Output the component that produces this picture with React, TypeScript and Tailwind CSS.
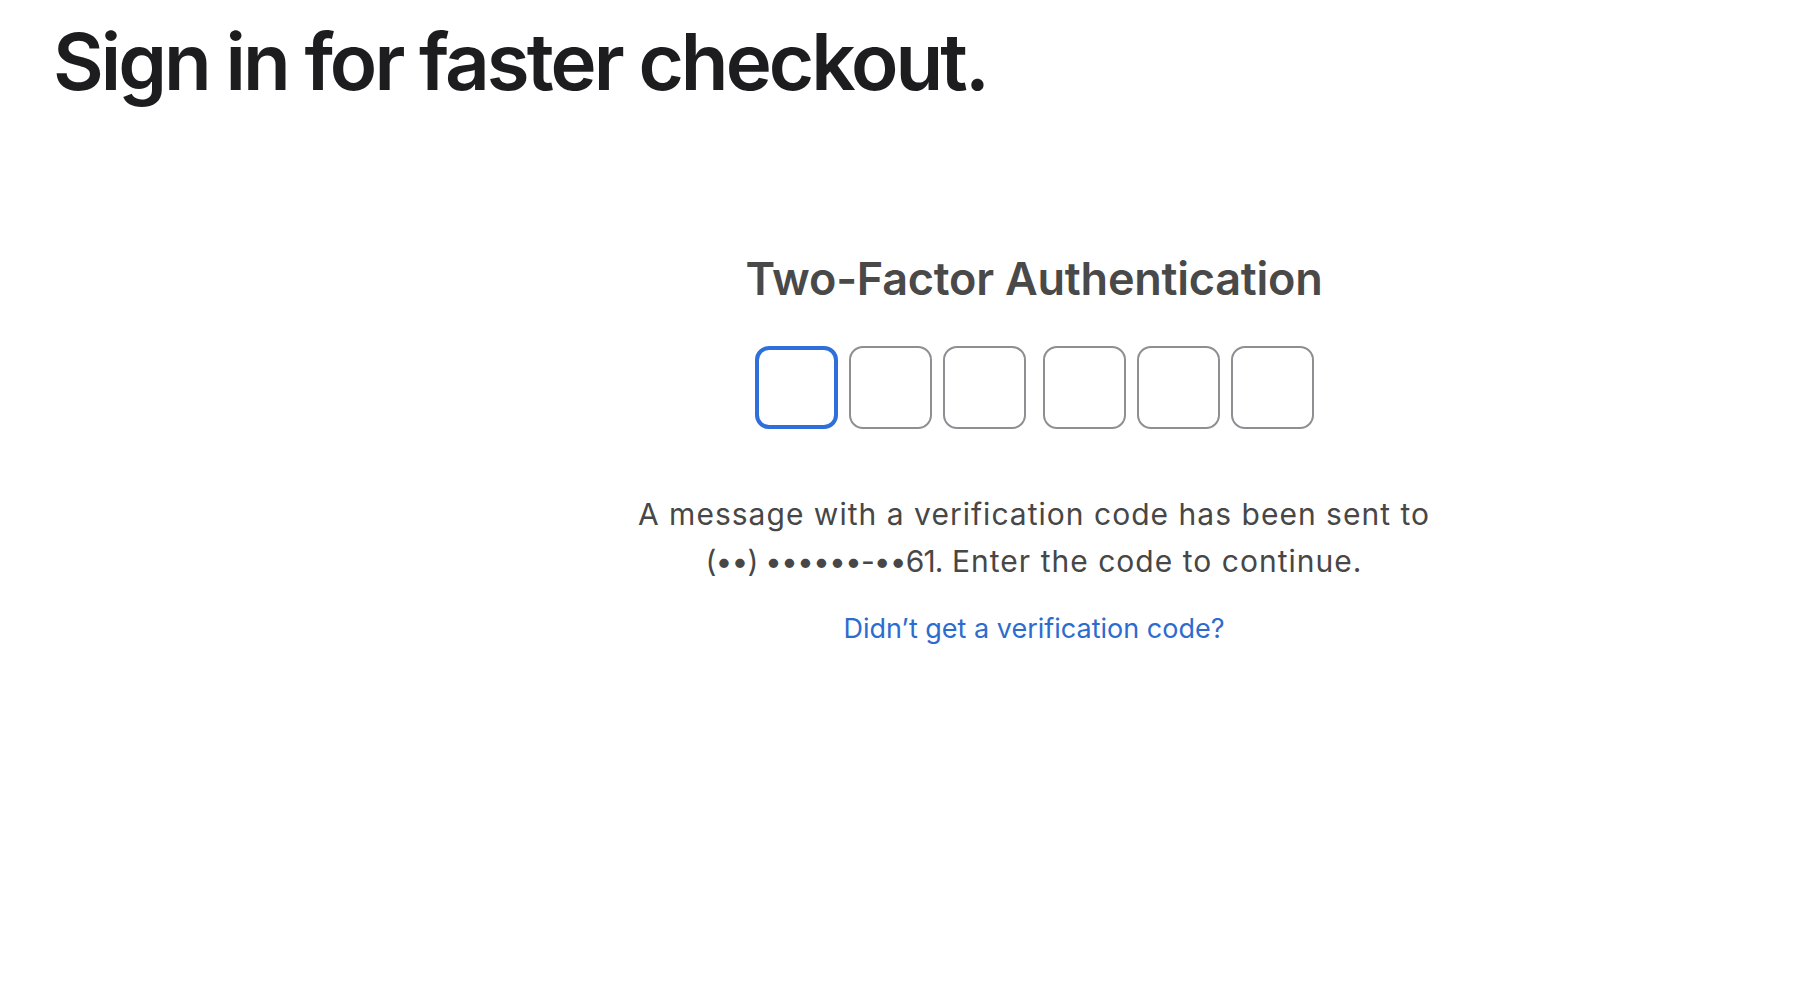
import { useState } from "react";

export default function App() {
  const [code, setCode] = useState<string[]>(["", "", "", "", "", ""]);

  function update(i: number, v: string) {
    const next = [...code];
    next[i] = v.slice(-1);
    setCode(next);
  }

  return (
    <div className="min-h-screen bg-white font-['Inter',sans-serif]">
      <h1 className="pl-[53px] pt-[22px] text-[78px] leading-[80px] font-semibold tracking-[-0.038em] text-[#1d1d1f]">
        Sign in for faster checkout.
      </h1>
      <div className="flex flex-col items-center pl-[252px]">
        <h2 className="mt-[150px] text-[45px] leading-[54px] font-semibold tracking-[-0.005em] text-[#494949]">
          Two-Factor Authentication
        </h2>
        <div className="mt-[40px] flex gap-[11px]">
          {code.map((c, i) => (
            <input
              key={i}
              value={c}
              onChange={(e) => update(i, e.target.value)}
              maxLength={1}
              inputMode="numeric"
              autoFocus={i === 0}
              className={
                i === 0
                  ? "w-[83px] h-[83px] rounded-[14px] border-4 border-[#2f6fd9] text-center text-[40px] outline-none"
                  : i === 3
                    ? "ml-[6px] w-[83px] h-[83px] rounded-[14px] border-2 border-[#8e8e93] text-center text-[40px] outline-none"
                    : "w-[83px] h-[83px] rounded-[14px] border-2 border-[#8e8e93] text-center text-[40px] outline-none"
              }
            />
          ))}
        </div>
        <p className="mt-[62px] max-w-[820px] text-center text-[30px] leading-[47px] tracking-[0.034em] text-[#474747]">
          A message with a verification code has been sent to{" "}
          <span className="tracking-[-0.03em]">(••) ••••••-••61.</span> Enter the code to continue.
        </p>
        <a href="#" className="mt-[26px] text-[27px] leading-[36px] text-[#2d6ccf]">
          Didn’t get a verification code?
        </a>
      </div>
    </div>
  );
}
